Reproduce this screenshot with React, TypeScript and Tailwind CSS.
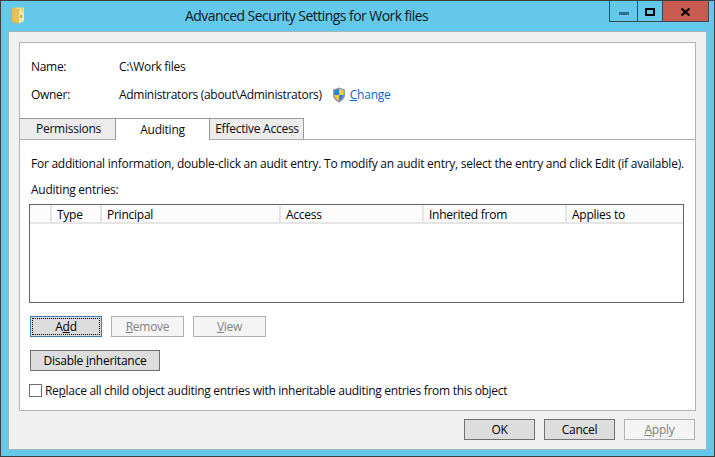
import React from "react";

const font = { fontFamily: '"Open Sans", "Noto Sans", sans-serif' };

function Btn({ children, w, disabled, focus }: { children: React.ReactNode; w: string; disabled?: boolean; focus?: boolean }) {
  return (
    <div
      className={`${w} h-[21px] flex items-center justify-center border text-[12px] relative ${
        disabled
          ? "border-[#adb2b5] bg-[#f4f4f4] text-[#838383]"
          : focus
          ? "border-[#3c7fb1] bg-[#dcdcdc] text-black"
          : "border-[#707070] bg-[#dddddd] text-black"
      }`}
    >
      {focus && <div className="absolute inset-[1px] border border-dotted border-black" />}
      <span>{children}</span>
    </div>
  );
}

function Th({ w, children }: { w: string; children?: React.ReactNode }) {
  return (
    <div className={`${w} h-full border-r-2 border-[#e5e5e5] pl-[5px] pt-[2px] text-[12px] leading-[15px] text-black shrink-0`}>
      {children}
    </div>
  );
}

export default function App() {
  return (
    <div
      className="w-[715px] h-[457px] bg-[#63c8ea] border border-[#3a3f42] flex flex-col overflow-hidden tracking-[-0.25px] text-[#0a0a14]"
      style={font}
    >
      <div className="h-[30px] flex shrink-0">
        <svg width="14" height="17" viewBox="0 0 14 17" className="ml-[10px] mt-[6px] shrink-0">
          <path d="M1 1 L6 0.5 L13 0.5 L13 14 L6 15 L1 15 Z" fill="#f3d77f" />
          <path d="M1 1 L8 3 L8 16.5 L1 15 Z" fill="#e6c05a" stroke="#d5b050" strokeWidth="0.5" />
          <path d="M8 3 L8 16.5 L13 14 L13 6 Z" fill="#f8e8ad" />
          <rect x="9" y="8" width="2" height="3" fill="#c9a848" />
        </svg>
        <div className="ml-[160px] mt-[5px] text-[14px] tracking-[-0.55px] leading-[20px] text-[#101820] whitespace-nowrap">
          Advanced Security Settings for Work files
        </div>
        <div className="ml-auto mr-[5px] flex h-[21px] border border-t-0 border-[#3a4a55]">
          <div className="w-[28px] border-r border-[#3a4a55] flex items-center justify-center">
            <div className="w-[10px] h-[3px] bg-[#2f6d88] mt-[5px]" />
          </div>
          <div className="w-[25px] border-r border-[#3a4a55] flex items-center justify-center">
            <div className="w-[10px] h-[8px] border-2 border-black mt-[1px]" />
          </div>
          <div className="w-[45px] bg-[#c75b50] flex items-center justify-center">
            <svg width="9" height="8" viewBox="0 0 9 8" className="mt-[1px]">
              <path d="M0.5 0.5 L8.5 7.5 M8.5 0.5 L0.5 7.5" stroke="#000" strokeWidth="2" />
            </svg>
          </div>
        </div>
      </div>

      <div className="mx-[7px] h-[419px] bg-[#f0f0f0] border border-[#9db6c6] flex flex-col pl-[10px] pr-[10px] pt-[10px] shrink-0">
        <div className="h-[369px] bg-white border border-[#b4b4b4] flex flex-col shrink-0">
          <div className="px-[11px] pt-[15px] text-[12px] leading-[17px] tracking-[-0.3px]">
            <div className="flex">
              <div className="w-[88px]">Name:</div>
              <div>C:\Work files</div>
            </div>
            <div className="flex mt-[11px] items-center">
              <div className="w-[88px]">Owner:</div>
              <div>Administrators (about\Administrators)</div>
              <svg width="14" height="16" viewBox="0 0 14 16" className="ml-[10px]">
                <path d="M7 0.5 L13 2.5 L13 8 C13 11.5 10 14 7 15.5 C4 14 1 11.5 1 8 L1 2.5 Z" fill="#8b9aa8" />
                <path d="M7 2 L7 8 L2.5 8 L2.5 3.5 Z" fill="#2f7fd3" />
                <path d="M7 2 L11.5 3.5 L11.5 8 L7 8 Z" fill="#f6ce3c" />
                <path d="M2.5 8 L7 8 L7 13.5 C4.8 12.5 2.5 10.5 2.5 8 Z" fill="#f6ce3c" />
                <path d="M7 8 L11.5 8 C11.5 10.5 9.2 12.5 7 13.5 Z" fill="#2f7fd3" />
              </svg>
              <div className="ml-[4px] text-[#0a66c8] tracking-[-0.2px]">
                <u className="underline">C</u>hange
              </div>
            </div>
          </div>

          <div className="mt-[15px] h-[22px] flex border-b border-[#acacac] shrink-0">
            <div className="w-[95px] h-[21px] bg-[#ececec] border-t border-[#9a9a9a] pl-[2px] flex items-center justify-center text-[12px]">
              Permissions
            </div>
            <div className="w-[95px] h-[22px] bg-white border-x border-t border-[#9a9a9a] flex items-center justify-center text-[12px] z-10">
              Auditing
            </div>
            <div className="w-[94px] h-[21px] bg-[#ececec] border-r border-t border-[#9a9a9a] pl-[1px] flex items-center justify-center text-[12px]">
              Effective Access
            </div>
          </div>

          <div className="px-[11px] pt-[15px] text-[12px] leading-[17px] flex flex-col">
            <div className="whitespace-nowrap">
              For additional information, double-click an audit entry. To modify an audit entry, select the entry and click Edit (if available).
            </div>
            <div className="mt-[9px]">Auditing entries:</div>
            <div className="ml-[-2px] mt-[6px] w-[655px] h-[99px] border border-[#646464] bg-white">
              <div className="h-[17px] flex border-b-2 border-[#e5e5e5] bg-[#fcfcfc] box-content">
                <Th w="w-[22px]" />
                <Th w="w-[50px]">Type</Th>
                <Th w="w-[179px]">Principal</Th>
                <Th w="w-[143px]">Access</Th>
                <Th w="w-[143px]">Inherited from</Th>
                <div className="pl-[5px] pt-[2px] leading-[15px] text-black">Applies to</div>
              </div>
            </div>
            <div className="mt-[13px] ml-[-1px] flex gap-[9px]">
              <Btn w="w-[72px]" focus>
                A<u>d</u>d
              </Btn>
              <Btn w="w-[73px]" disabled>
                <u>R</u>emove
              </Btn>
              <Btn w="w-[73px]" disabled>
                <u>V</u>iew
              </Btn>
            </div>
            <div className="mt-[13px] ml-[-1px]">
              <Btn w="w-[130px]">
                Disable <u>i</u>nheritance
              </Btn>
            </div>
            <div className="mt-[11px] flex items-center ml-[-2px]">
              <div className="w-[13px] h-[13px] border border-[#707070] bg-white shrink-0" />
              <div className="ml-[3px] whitespace-nowrap tracking-[-0.3px]">
                Re<u>p</u>lace all child object auditing entries with inheritable auditing entries from this object
              </div>
            </div>
          </div>
        </div>

        <div className="mt-[8px] pr-[1px] flex justify-end gap-[9px]">
          <Btn w="w-[71px]">OK</Btn>
          <Btn w="w-[71px]">Cancel</Btn>
          <Btn w="w-[71px]" disabled>
            <u>A</u>pply
          </Btn>
        </div>
      </div>
    </div>
  );
}
